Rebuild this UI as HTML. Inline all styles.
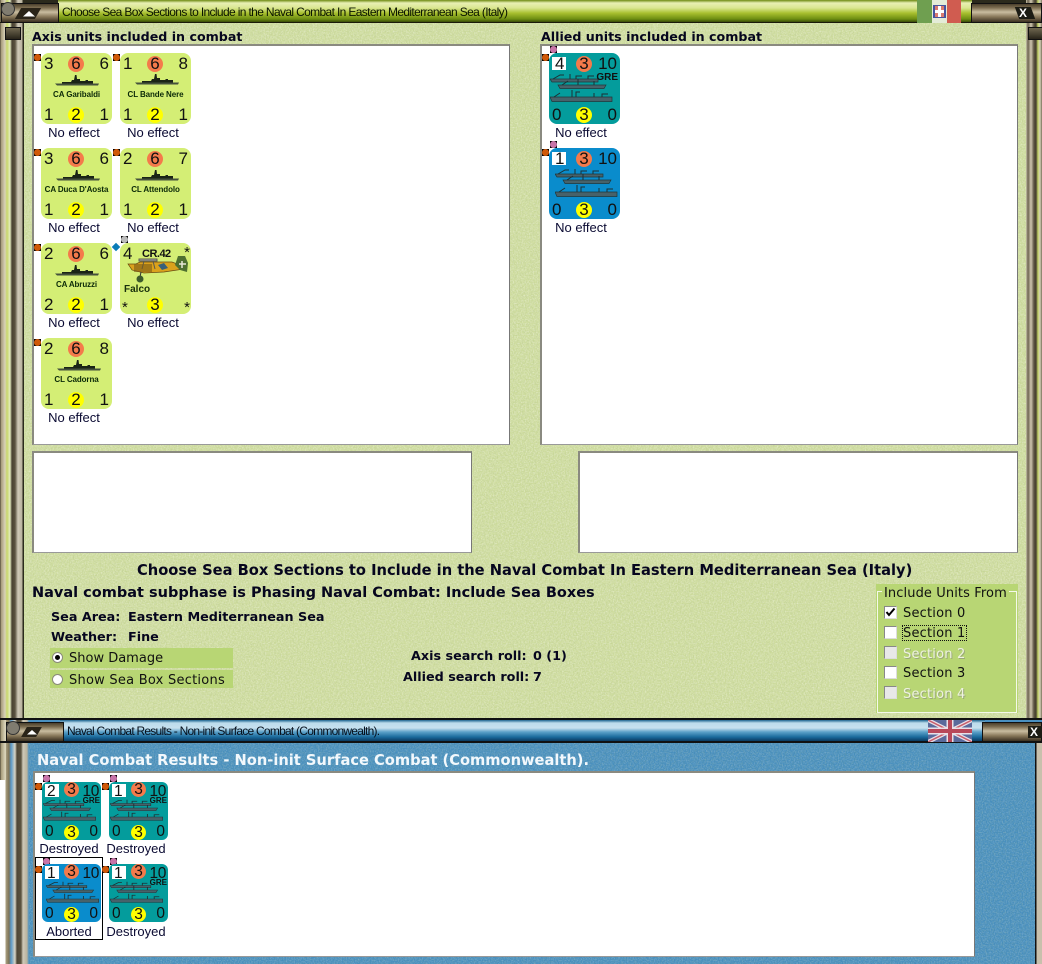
<!DOCTYPE html>
<html><head><meta charset="utf-8"><title>Naval Combat</title>
<style>
html,body{margin:0;padding:0;background:#fff}
#p{position:relative;width:1042px;height:964px;overflow:hidden;background:#fff;font-family:"Liberation Sans",sans-serif;color:#000}
#p div,#p span,#p svg{position:absolute}
.v{font-family:"DejaVu Sans",sans-serif;font-size:12.75px;white-space:nowrap;line-height:15px;color:#06061e}
.b{font-weight:bold}
.wp{background:#fff;border-top:2px solid #8a8a80;border-left:2px solid #8a8a80;border-right:1px solid #777;border-bottom:1px solid #999;box-sizing:border-box}
.u{width:71px;height:71px;border-radius:8px;background:#d4ee75}
.u.t{background:#049c9c}.u.c{background:#0a8ccc}
.u span{line-height:20px;font-size:17px;white-space:nowrap;color:#111}
.tl{left:3px;top:1px}.tr{right:3px;top:1px}.bl{left:3px;bottom:-1px}.br{right:3px;bottom:-1px}
.oc{left:27px;top:3px;width:16px;height:16px;border-radius:50%;background:#f47a4b}
.yc{left:27px;top:54px;width:16px;height:16px;border-radius:50%;background:#ffff00}
.on{left:27px;top:1px;width:16px;text-align:center}
.yn{left:27px;top:52px;width:16px;text-align:center}
.nm{left:0;width:71px;top:36px;text-align:center;font-size:8px!important;letter-spacing:-.1px;font-weight:bold;line-height:12px!important;color:#0c2a08!important}
.m{width:7px;height:7px;background:#000}
.m:after{content:"";position:absolute;left:0;top:0;width:7px;height:7px;border-radius:50%;background:#d05808}
.m.p:after{background:#c874a8}
.m.g:after{background:#bbb}
.l{font-size:13px;line-height:16px;width:90px;text-align:center;color:#0a0a32;white-space:nowrap}
.s{width:59px;height:58px;border-radius:6px}
.s span{font-size:15.5px;line-height:18px}
.s .tl{left:5px;top:1px}.s .tr{right:2px;top:1px;letter-spacing:-.4px}.s .bl{left:3px;bottom:-1px}.s .br{right:3px;bottom:-1px}
.s .oc{left:22px;top:0;width:15px;height:15px}.s .yc{left:22px;top:43px;width:15px;height:15px}
.s .on{left:22px;top:-1px;width:15px}.s .yn{left:22px;top:42px;width:15px}
.bx{left:3px;top:4px;width:14px;height:13px;background:#fff}
.s .bx{left:3px;top:2px;width:14px;height:13px}
.cb{width:11px;height:11px;background:#fff;border:1px solid #888;border-right-color:#ddd;border-bottom-color:#ddd}
.cb.d{background:#e8e8e8}
.sec{font-family:"DejaVu Sans",sans-serif;font-size:13px;line-height:16px;white-space:nowrap;color:#111}
.dis{color:#eef2e0;text-shadow:1px 1px 0 #9aa87a}
.capbtn{background:linear-gradient(#4a3f2c,#7a6b4f 20%,#c9bda0 45%,#8a7a5c 70%,#3a3020);border:1px solid #111;box-sizing:border-box}
</style></head><body><div id="p">

<svg width="0" height="0" style="left:0;top:0">
<defs>
<g id="sh"><path d="M0 8.5H44L43 10.5H2Z" fill="#44503c"/><path d="M7 8.5V7H16L17 5H19L20 0H21.5L22 4H25V6H30L31 5H33V6H38V8.5Z" fill="#1a2416"/></g>
<g id="fl"><g fill="#47626a" stroke="#22363a" stroke-width=".7"><path d="M0 6H48V9H2Z"/><path d="M8 12H56L54 15.5H10Z"/><path d="M0 24H62V28.5H2Z"/></g><g stroke="#1c3034" fill="none" stroke-width="1"><path d="M3 6 10 2H14M20 6V1M26 6V3H32M38 6V3H44M12 12 18 8M28 12V6M44 12V8M4 24 10 20M22 24V17M26 24V19H30M44 24V20M52 24V21H58"/></g></g>
<filter id="nz"><feTurbulence type="fractalNoise" baseFrequency=".75" numOctaves="2" seed="3"/><feColorMatrix values="0 0 0 0 1  0 0 0 0 1  0 0 0 0 1  1.4 0 0 0 -.52"/></filter>
<filter id="nd"><feTurbulence type="fractalNoise" baseFrequency=".55" numOctaves="2" seed="9"/><feColorMatrix values="0 0 0 0 .35  0 0 0 0 .45  0 0 0 0 .2  1.4 0 0 0 -.55"/></filter>
</defs>
</svg>

<!-- top window -->
<div style="left:0;top:0;width:1042px;height:720px;background:linear-gradient(90deg,#3f3a2c 0,#a59a78 1px,#d8d2b8 5px,#c8d86a 7px,#e4ecc0 10px,#4a4232 12px,#5a5240 15px,#cfc9b8 18px,#b9b39e 22px,#2b2a1c 23px,#2b2a1c 24px)"></div>
<div style="left:1026px;top:0;width:16px;height:720px;background:linear-gradient(90deg,#c9c4ac 0,#6d6350 2px,#d0c8b0 5px,#5a5240 8px,#46402e 10px,#c4d468 12px,#d4d0b8 14px,#7a7058 16px)"></div>
<div style="left:24px;top:22px;width:1002px;height:696px;background:#cedc9d"></div>
<svg style="left:24px;top:22px" width="1002" height="696"><rect width="1002" height="696" filter="url(#nz)" opacity=".6"/><rect width="1002" height="696" filter="url(#nd)" opacity=".35"/></svg>

<!-- title bar 1 -->
<div style="left:58px;top:0;width:914px;height:22px;background:linear-gradient(#6d8a12 0,#e8f0b4 3px,#d9e690 8px,#a9c030 13px,#6d8e12 19px,#3a4a08 22px)"></div>
<div style="left:0;top:22px;width:1042px;height:1px;background:#1a1a0a"></div>
<div style="left:917px;top:0;width:15px;height:23px;background:#6f9f50"></div>
<div style="left:932px;top:0;width:15px;height:23px;background:#e4ecd8"></div>
<div style="left:947px;top:0;width:14px;height:23px;background:#d05c50"></div>
<div style="left:933px;top:5px;width:13px;height:13px;background:#46549e"></div>
<div style="left:935px;top:6px;width:9px;height:11px;background:#d87a70"></div>
<div style="left:938px;top:6px;width:3px;height:11px;background:#fff"></div>
<div style="left:935px;top:10px;width:9px;height:3px;background:#fff"></div>
<div class="capbtn" style="left:1px;top:3px;width:58px;height:20px"></div>
<div style="left:1px;top:2px;width:14px;height:14px;border-radius:50%;background:#807c70;border:1px solid #333;box-sizing:border-box"></div>
<div style="left:18px;top:8px;width:20px;height:11px;background:#2a2418;transform:skewX(-30deg)"></div>
<svg style="left:22px;top:10px" width="14" height="7"><path d="M1 6.5 7 1 13 6.5Z" fill="#fff"/></svg>
<div class="capbtn" style="left:971px;top:3px;width:71px;height:20px"></div>
<div style="left:1017px;top:7px;width:16px;height:12px;background:#1c1c14;transform:skewX(20deg)"></div>
<span style="left:1019px;top:6px;font:bold 12px/14px 'Liberation Sans',sans-serif;color:#fff">X</span>
<span style="left:62px;top:5px;font-size:12px;line-height:14px;white-space:nowrap;letter-spacing:-.64px;color:#0a1400">Choose Sea Box Sections to Include in the Naval Combat In Eastern Mediterranean Sea (Italy)</span>

<!-- frame button -->
<div style="left:5px;top:27px;width:14px;height:11px;background:linear-gradient(#706850,#28241a);border:1px solid #111"></div>
<div style="left:1028px;top:27px;width:14px;height:11px;background:linear-gradient(#706850,#28241a);border:1px solid #111"></div>

<span class="v b" style="left:32px;top:29px;font-size:12.65px">Axis units included in combat</span>
<span class="v b" style="left:541px;top:29px;font-size:12.65px">Allied units included in combat</span>
<div class="wp" style="left:32px;top:44px;width:478px;height:401px"></div>
<div class="wp" style="left:540px;top:44px;width:478px;height:401px"></div>
<div class="wp" style="left:32px;top:451px;width:440px;height:102px"></div>
<div class="wp" style="left:578px;top:451px;width:440px;height:102px"></div>

<!-- axis units -->
<div class="m" style="left:34px;top:54px"></div>
<div class="u" style="left:41px;top:53px"><span class="tl">3</span><div class="oc"></div><span class="on">6</span><span class="tr">6</span><svg style="left:14px;top:22px" width="44" height="12"><use href="#sh"/></svg><span class="nm">CA Garibaldi</span><span class="bl">1</span><div class="yc"></div><span class="yn">2</span><span class="br">1</span></div>
<div class="l" style="left:29px;top:125px">No effect</div>
<div class="m" style="left:113px;top:54px"></div>
<div class="u" style="left:120px;top:53px"><span class="tl">1</span><div class="oc"></div><span class="on">6</span><span class="tr">8</span><svg style="left:15px;top:21px" width="44" height="12"><use href="#sh"/></svg><span class="nm">CL Bande Nere</span><span class="bl">1</span><div class="yc"></div><span class="yn">2</span><span class="br">1</span></div>
<div class="l" style="left:108px;top:125px">No effect</div>

<div class="m" style="left:34px;top:149px"></div>
<div class="u" style="left:41px;top:148px"><span class="tl">3</span><div class="oc"></div><span class="on">6</span><span class="tr">6</span><svg style="left:15px;top:22px" width="44" height="12"><use href="#sh"/></svg><span class="nm">CA Duca D'Aosta</span><span class="bl">1</span><div class="yc"></div><span class="yn">2</span><span class="br">1</span></div>
<div class="l" style="left:29px;top:220px">No effect</div>
<div class="m" style="left:113px;top:149px"></div>
<div class="u" style="left:120px;top:148px"><span class="tl">2</span><div class="oc"></div><span class="on">6</span><span class="tr">7</span><svg style="left:15px;top:22px" width="44" height="12"><use href="#sh"/></svg><span class="nm">CL Attendolo</span><span class="bl">1</span><div class="yc"></div><span class="yn">2</span><span class="br">1</span></div>
<div class="l" style="left:108px;top:220px">No effect</div>

<div class="m" style="left:34px;top:244px"></div>
<div class="u" style="left:41px;top:243px"><span class="tl">2</span><div class="oc"></div><span class="on">6</span><span class="tr">6</span><svg style="left:14px;top:22px" width="44" height="12"><use href="#sh"/></svg><span class="nm">CA Abruzzi</span><span class="bl">2</span><div class="yc"></div><span class="yn">2</span><span class="br">1</span></div>
<div class="l" style="left:29px;top:315px">No effect</div>
<div class="m g" style="left:121px;top:236px"></div>
<div style="left:113px;top:244px;width:6px;height:6px;background:#0a7cb8;transform:rotate(45deg)"></div>
<div class="u" style="left:120px;top:243px"><span class="tl">4</span>
<svg style="left:0;top:0" width="71" height="45"><path d="M8 21H16L20 19H52L60 22 64 26 44 29 24 30 12 27Z" fill="#dba21c" stroke="#6a4a10" stroke-width=".7"/><path d="M19 16H37V18H19ZM24 18 22 26M33 18 35 26" stroke="#5a5a50" fill="#aaa"/><path d="M58 13 65 13 68 20 67 29 60 27 55 22Z" fill="#4e7030"/><path d="M62 18V25M59 21H66" stroke="#e8e8d8" stroke-width="1.5"/><path d="M14 21H32V29H14Z" fill="#7a5a18" opacity=".6"/><path d="M38 22 44 20 48 25 42 27Z" fill="#39607a"/><path d="M21 29 20 34" stroke="#333"/><circle cx="20" cy="36" r="3.5" fill="#3c5a2c"/></svg>
<span style="left:22px;top:4px;font-size:11px;font-weight:bold;letter-spacing:-.5px;line-height:14px">CR.42</span><span style="right:1px;top:3px;font-size:15px;line-height:14px">*</span>
<span style="left:4px;top:41px;font-size:10px;font-weight:bold;line-height:12px;color:#18300c">Falco</span><span style="left:2px;bottom:-2px;font-size:15px;line-height:16px">*</span><div class="yc"></div><span class="yn">3</span><span style="right:1px;bottom:-2px;font-size:15px;line-height:16px">*</span></div>
<div class="l" style="left:108px;top:315px">No effect</div>

<div class="m" style="left:34px;top:339px"></div>
<div class="u" style="left:41px;top:338px"><span class="tl">2</span><div class="oc"></div><span class="on">6</span><span class="tr">8</span><svg style="left:16px;top:22px" width="44" height="12"><use href="#sh"/></svg><span class="nm">CL Cadorna</span><span class="bl">1</span><div class="yc"></div><span class="yn">2</span><span class="br">1</span></div>
<div class="l" style="left:29px;top:410px">No effect</div>

<!-- allied units -->
<div class="m p" style="left:550px;top:46px"></div>
<div class="m" style="left:542px;top:54px"></div>
<div class="u t" style="left:549px;top:53px"><div class="bx"></div><span class="tl" style="left:6px">4</span><div class="oc"></div><span class="on">3</span><span class="tr">10</span><svg style="left:1px;top:20px" width="64" height="30"><use href="#fl"/></svg><span style="right:2px;top:18px;font-size:10px;font-weight:bold;line-height:13px">GRE</span><span class="bl">0</span><div class="yc"></div><span class="yn">3</span><span class="br">0</span></div>
<div class="l" style="left:536px;top:125px">No effect</div>
<div class="m p" style="left:550px;top:141px"></div>
<div class="m" style="left:542px;top:149px"></div>
<div class="u c" style="left:549px;top:148px"><div class="bx"></div><span class="tl" style="left:6px">1</span><div class="oc"></div><span class="on">3</span><span class="tr">10</span><svg style="left:6px;top:20px" width="64" height="30"><use href="#fl"/></svg><span class="bl">0</span><div class="yc"></div><span class="yn">3</span><span class="br">0</span></div>
<div class="l" style="left:536px;top:220px">No effect</div>

<!-- mid text -->
<span class="v b" style="left:137px;top:562px;font-size:14.66px;line-height:18px">Choose Sea Box Sections to Include in the Naval Combat In Eastern Mediterranean Sea (Italy)</span>
<span class="v b" style="left:32px;top:584px;font-size:14.5px;line-height:18px">Naval combat subphase is Phasing Naval Combat: Include Sea Boxes</span>
<span class="v b" style="left:51px;top:610px">Sea Area:</span>
<span class="v b" style="left:128px;top:610px">Eastern Mediterranean Sea</span>
<span class="v b" style="left:51px;top:630px">Weather:</span>
<span class="v b" style="left:128px;top:630px">Fine</span>
<span class="v b" style="left:411px;top:649px">Axis search roll:</span>
<span class="v b" style="left:533px;top:649px">0 (1)</span>
<span class="v b" style="left:403px;top:670px">Allied search roll:</span>
<span class="v b" style="left:533px;top:670px">7</span>

<div style="left:50px;top:648px;width:183px;height:20px;background:#b8d674"></div>
<div style="left:50px;top:670px;width:183px;height:18px;background:#b8d674"></div>
<div style="left:52px;top:652px;width:11px;height:11px;border-radius:50%;background:#fff;border:1px solid #8a8a7a;box-sizing:border-box"></div>
<div style="left:55px;top:655px;width:5px;height:5px;border-radius:50%;background:#000"></div>
<div style="left:52px;top:674px;width:11px;height:11px;border-radius:50%;background:#fff;border:1px solid #8a8a7a;box-sizing:border-box"></div>
<span class="sec" style="left:69px;top:651px">Show Damage</span>
<span class="sec" style="left:69px;top:673px;letter-spacing:.24px">Show Sea Box Sections</span>

<!-- group -->
<div style="left:876px;top:584px;width:142px;height:129px;background:#b8d674"></div>
<div style="left:877px;top:591px;width:138px;height:120px;border:1px solid #f4f8ea"></div>
<span class="sec" style="left:882px;top:587px;background:#b8d674;padding:0 2px;letter-spacing:.1px;line-height:13px">Include Units From</span>
<div class="cb" style="left:884px;top:606px"></div>
<svg style="left:885px;top:607px" width="11" height="11"><path d="M1.5 5 4 8 9.5 1.5" stroke="#000" stroke-width="2" fill="none"/></svg>
<span class="sec" style="left:903px;top:607px;letter-spacing:.2px;line-height:14px">Section 0</span>
<div class="cb" style="left:884px;top:626px"></div>
<span class="sec" style="left:903px;top:627px;letter-spacing:.2px;line-height:14px">Section 1</span>
<div style="left:902px;top:625px;width:63px;height:14px;border:1px dotted #111"></div>
<div class="cb d" style="left:884px;top:646px"></div>
<span class="sec dis" style="left:903px;top:648px;letter-spacing:.2px;line-height:14px">Section 2</span>
<div class="cb" style="left:884px;top:666px"></div>
<span class="sec" style="left:903px;top:667px;letter-spacing:.2px;line-height:14px">Section 3</span>
<div class="cb d" style="left:884px;top:686px"></div>
<span class="sec dis" style="left:903px;top:688px;letter-spacing:.2px;line-height:14px">Section 4</span>

<!-- bottom window -->
<div style="left:0;top:718px;width:1042px;height:246px;background:linear-gradient(90deg,#fff 0,#fff 5px,#a89e7e 6px,#7c7258 9px,#5898c8 11px,#d8d4c4 15px,#4e4636 17px,#5c5440 21px,#cfc9b8 23px,#b9b39e 27px,#4a90c0 29px)"></div>
<div style="left:0;top:718px;width:6px;height:62px;background:linear-gradient(90deg,#3f3a2c 0,#a59a78 1px,#d8d2b8 5px)"></div>
<div style="left:29px;top:743px;width:1006px;height:221px;background:#478ebd"></div>
<svg style="left:29px;top:743px" width="1006" height="221"><rect width="1006" height="221" filter="url(#nz)" opacity=".35"/><rect width="1006" height="221" filter="url(#nd)" opacity=".25"/></svg>
<div style="left:1035px;top:743px;width:7px;height:221px;background:linear-gradient(90deg,#111 0,#111 1px,#c8c0ac 2px)"></div>
<div style="left:0;top:718px;width:1042px;height:2px;background:#111"></div>
<div style="left:60px;top:720px;width:925px;height:21px;background:linear-gradient(#1c6490 0,#bcdcec 3px,#c6e0ee 8px,#5aa0c8 12px,#1a6a9c 17px,#0a3a60 21px)"></div>
<div style="left:0;top:741px;width:1042px;height:2px;background:#111"></div>
<svg style="left:928px;top:720px" width="44" height="22"><rect width="44" height="22" fill="#5a6a9c"/><path d="M0 0 44 22M44 0 0 22" stroke="#e8e0e8" stroke-width="4"/><path d="M0 0 44 22M44 0 0 22" stroke="#c8606e" stroke-width="1.5"/><path d="M22 0V22M0 11H44" stroke="#e8e0e8" stroke-width="7"/><path d="M22 0V22M0 11H44" stroke="#b8485a" stroke-width="4"/></svg>
<div class="capbtn" style="left:6px;top:722px;width:58px;height:20px"></div>
<div style="left:6px;top:721px;width:14px;height:14px;border-radius:50%;background:#807c70;border:1px solid #333;box-sizing:border-box"></div>
<div style="left:24px;top:727px;width:15px;height:10px;background:#2a2418;transform:skewX(-30deg)"></div>
<svg style="left:26px;top:729px" width="12" height="6"><path d="M1 5.5 6 1 11 5.5Z" fill="#fff"/></svg>
<div class="capbtn" style="left:982px;top:722px;width:60px;height:20px"></div>
<div style="left:1028px;top:726px;width:14px;height:12px;background:#1c1c14"></div>
<span style="left:1030px;top:725px;font:bold 12px/14px 'Liberation Sans',sans-serif;color:#fff">X</span>
<span style="left:67px;top:724px;font-size:12px;line-height:14px;white-space:nowrap;letter-spacing:-.76px;color:#06101c">Naval Combat Results - Non-init Surface Combat (Commonwealth).</span>

<span class="v b" style="left:37px;top:752px;font-size:14.65px;line-height:18px;color:#f2f8fc">Naval Combat Results - Non-init Surface Combat (Commonwealth).</span>
<div class="wp" style="left:33px;top:771px;width:942px;height:186px"></div>

<!-- results -->
<div class="m p" style="left:43px;top:775px"></div>
<div class="m" style="left:35px;top:783px"></div>
<div class="u s t" style="left:42px;top:782px"><div class="bx"></div><span class="tl">2</span><div class="oc"></div><span class="on">3</span><span class="tr">10</span><svg style="left:1px;top:17px" width="54" height="23"><use href="#fl" transform="scale(.85,.75)"/></svg><span style="right:1px;top:14px;font-size:8px;font-weight:bold;line-height:9px">GRE</span><span class="bl">0</span><div class="yc"></div><span class="yn">3</span><span class="br">0</span></div>
<div class="l" style="left:24px;top:841px">Destroyed</div>
<div class="m p" style="left:110px;top:775px"></div>
<div class="m" style="left:102px;top:783px"></div>
<div class="u s t" style="left:109px;top:782px"><div class="bx"></div><span class="tl">1</span><div class="oc"></div><span class="on">3</span><span class="tr">10</span><svg style="left:1px;top:17px" width="54" height="23"><use href="#fl" transform="scale(.85,.75)"/></svg><span style="right:1px;top:14px;font-size:8px;font-weight:bold;line-height:9px">GRE</span><span class="bl">0</span><div class="yc"></div><span class="yn">3</span><span class="br">0</span></div>
<div class="l" style="left:91px;top:841px">Destroyed</div>

<div style="left:35px;top:857px;width:66px;height:81px;border:1px solid #000"></div>
<div class="m p" style="left:43px;top:858px"></div>
<div class="m" style="left:35px;top:866px"></div>
<div class="u s c" style="left:42px;top:864px"><div class="bx"></div><span class="tl">1</span><div class="oc"></div><span class="on">3</span><span class="tr">10</span><svg style="left:4px;top:17px" width="54" height="23"><use href="#fl" transform="scale(.85,.75)"/></svg><span class="bl">0</span><div class="yc"></div><span class="yn">3</span><span class="br">0</span></div>
<div class="l" style="left:24px;top:924px">Aborted</div>
<div class="m p" style="left:110px;top:858px"></div>
<div class="m" style="left:102px;top:866px"></div>
<div class="u s t" style="left:109px;top:864px"><div class="bx"></div><span class="tl">1</span><div class="oc"></div><span class="on">3</span><span class="tr">10</span><svg style="left:1px;top:17px" width="54" height="23"><use href="#fl" transform="scale(.85,.75)"/></svg><span style="right:1px;top:14px;font-size:8px;font-weight:bold;line-height:9px">GRE</span><span class="bl">0</span><div class="yc"></div><span class="yn">3</span><span class="br">0</span></div>
<div class="l" style="left:91px;top:924px">Destroyed</div>

</div></body></html>
